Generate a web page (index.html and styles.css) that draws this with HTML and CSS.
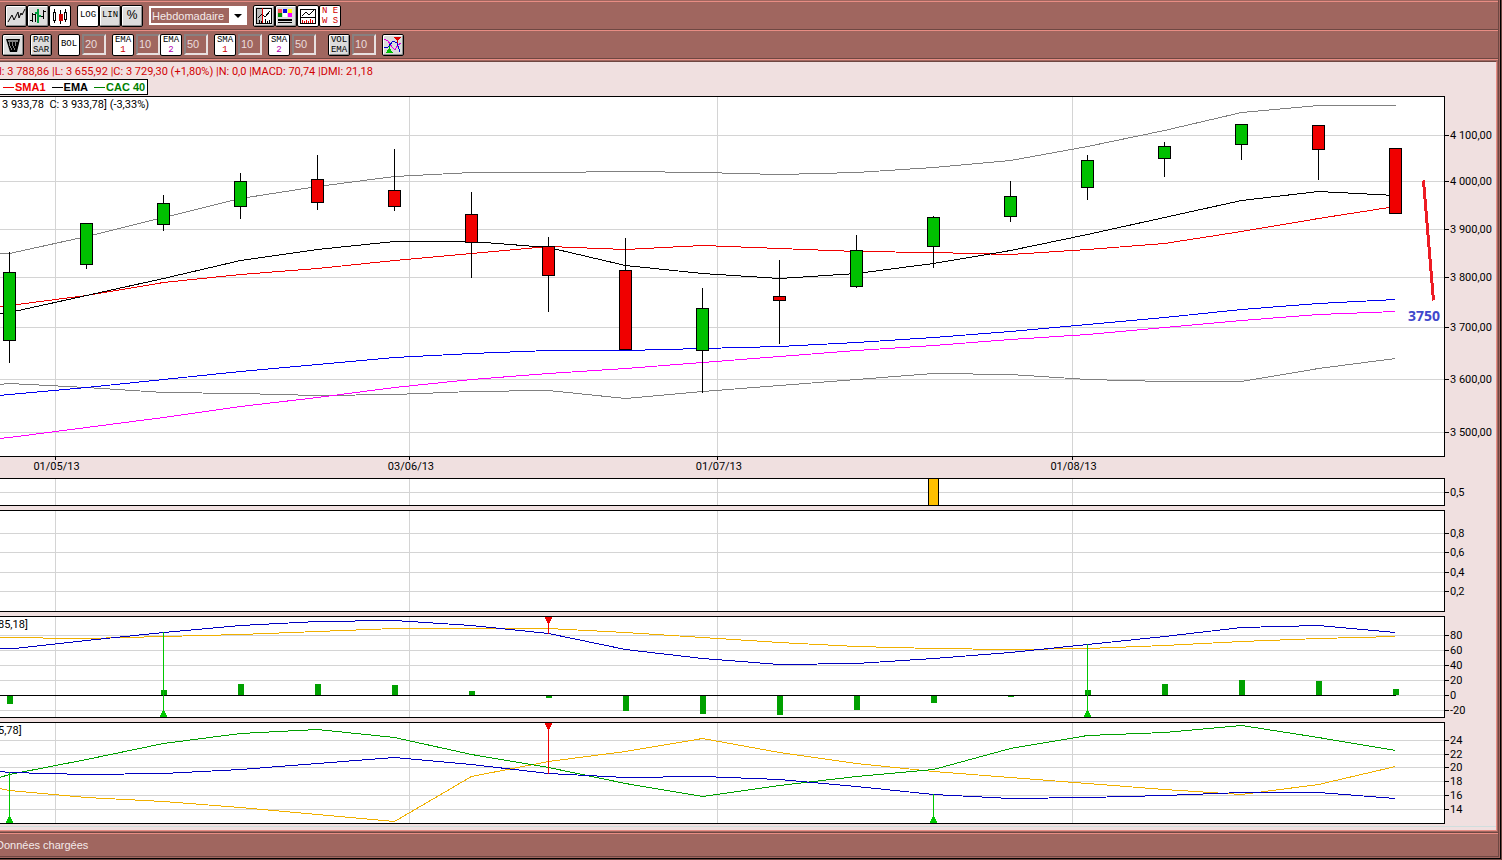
FILE: index.html
```html
<!DOCTYPE html>
<html lang="fr">
<head>
  <meta charset="UTF-8">
  <meta name="viewport" content="width=device-width, initial-scale=1.0">
  <title>CAC 40 - Hebdomadaire</title>
  <link rel="stylesheet" href="styles.css">
</head>
<body>
  <div class="app">
    <div class="toolbar toolbar-main">
      <div class="group">
        <button type="button" class="btn" aria-label="Ligne">
          <svg viewBox="0 0 20 20"><path d="M2 16l4-7 2 5 4-8 1 6 2-5 1 2 3-6" fill="none" stroke="#000"/></svg>
        </button>
        <button type="button" class="btn" aria-label="Barres">
          <svg viewBox="0 0 20 20" class="crisp"><path d="M4.500 7v9M2 14.500h2M5 8.500h2M15.500 4v9M13 10.500h2M16 5.500h2M7.500 6v10" fill="none" stroke="#000"/><path d="M10 3v14M7 7h3M10 10h3" fill="none" stroke="#00a040" stroke-width="2"/></svg>
        </button>
        <button type="button" class="btn on" aria-label="Chandeliers">
          <svg viewBox="0 0 20 20" class="crisp"><path d="M4.500 3v14M15.500 3v13" stroke="#000"/><path d="M3.500 6.500h2v8h-2zM14.500 6.500h2v7h-2z" fill="#fff" stroke="#000"/><path d="M10.500 4v14" stroke="#000"/><path d="M9 8h4v7H9z" fill="#d00000"/></svg>
        </button>
      </div>
      <div class="group">
        <button type="button" class="btn on">LOG</button>
        <button type="button" class="btn">LIN</button>
        <button type="button" class="btn percent">%</button>
      </div>
      <div class="period">
        <select aria-label="Période">
          <option>Hebdomadaire</option>
        </select>
        <svg class="arrow" viewBox="0 0 8 4"><path d="M0 0h8l-4 4z"/></svg>
      </div>
      <div class="group">
        <button type="button" class="btn" aria-label="Curseur">
          <svg viewBox="0 0 20 20" class="crisp"><path d="M2.500 2.500h15v15h-15z" fill="#fff" stroke="#000"/><path d="M3 3h5v14H3z" fill="#bbb"/><path d="M4 12l4-4 3 3 5-6" fill="none" stroke="#000"/><path d="M5.500 17v-3M7.500 17v-2M11.500 17v-4M13.500 17v-2M15.500 17v-3" stroke="#000"/><path d="M8.500 2v15" stroke="#e00000"/></svg>
        </button>
        <button type="button" class="btn" aria-label="Couleurs">
          <svg viewBox="0 0 20 20" class="crisp"><path d="M2 3h4v4H2z" fill="#ff5050"/><path d="M7 3h4v4H7z" fill="#0000e0"/><path d="M12 3h4v4h-4z" fill="#ff0"/><path d="M2 7h4v4H2z" fill="#009000"/><path d="M7 7h4v4H7z" fill="#fff"/><path d="M12 7h4v4h-4z" fill="#f0f"/><path d="M2 13h14v2H2zM2 16h14v1H2z"/></svg>
        </button>
        <button type="button" class="btn on" aria-label="Volumes">
          <svg viewBox="0 0 20 20" class="crisp"><path d="M2.500 3.500h15v8h-15zM2.500 11v6.500h15V11" fill="none" stroke="#000"/><path d="M4 10l4-4 3 3 5-5" fill="none" stroke="#000"/><path d="M4.500 17v-3M6.500 17v-2M8.500 17v-3M10.500 17v-2M12.500 17v-4M14.500 17v-3" stroke="#e00000"/></svg>
        </button>
        <button type="button" class="btn on news"><span>N E</span><span>W S</span></button>
      </div>
    </div>

    <div class="toolbar toolbar-indicators">
      <button type="button" class="btn" aria-label="Corbeille">
        <svg viewBox="0 0 20 20"><path d="M3 4h14l-3 13H7z" fill="#000"/><path d="M5 6h10" stroke="#fff"/><path d="M6 8h8M6 10h8M7 12h6M8 14h4" stroke="#fff" stroke-dasharray="1 2"/></svg>
      </button>
      <button type="button" class="btn"><span>PAR</span><span>SAR</span></button>
      <div class="field">
        <button type="button" class="btn on">BOL</button>
        <input type="text" value="20" aria-label="Période BOL">
      </div>
      <div class="group">
        <div class="field">
          <button type="button" class="btn on"><span>EMA</span><span class="red">1</span></button>
          <input type="text" value="10" aria-label="Période EMA 1">
        </div>
        <div class="field">
          <button type="button" class="btn on"><span>EMA</span><span class="purple">2</span></button>
          <input type="text" value="50" aria-label="Période EMA 2">
        </div>
      </div>
      <div class="field">
        <button type="button" class="btn on"><span>SMA</span><span class="red">1</span></button>
        <input type="text" value="10" aria-label="Période SMA 1">
      </div>
      <div class="field">
        <button type="button" class="btn on"><span>SMA</span><span class="purple">2</span></button>
        <input type="text" value="50" aria-label="Période SMA 2">
      </div>
      <div class="field field-volume">
        <button type="button" class="btn"><span>VOL</span><span>EMA</span></button>
        <input type="text" value="10" aria-label="Période EMA volume">
      </div>
      <button type="button" class="btn" aria-label="Signaux">
        <svg viewBox="0 0 20 20" class="crisp"><path d="M1 4l4 2 4 6 3 3 3-5 3-2" fill="none" stroke="#e000e0"/><path d="M1 13l4-1 5-6 4 2 3 9" fill="none" stroke="#0000d0"/><path d="M11 2h7l-3 4v2h-1V6z" fill="#e00000"/><path d="M3 18h7l-3-5v-2H6v2z" fill="#00c000"/></svg>
      </button>
    </div>

    <main class="charts">
      <p class="quote">H: 3 788,86 |L: 3 655,92 |C: 3 729,30 (+1,80%) |N: 0,0 |MACD: 70,74 |DMI: 21,18</p>
      <div class="legend">
        <span class="key sma">SMA1</span>
        <span class="key ema">EMA</span>
        <span class="key cac">CAC 40</span>
      </div>

      <!-- Price -->
      <section class="panel price">
        <div class="plot">
          <svg viewBox="0 97 1444 359" preserveAspectRatio="none">
            <g transform="translate(.5 .5)">
              <path class="grid" d="M-1 135H1444M-1 181H1444M-1 229H1444M-1 277H1444M-1 327H1444M-1 379H1444M-1 432H1444M55 96V456M409 96V456M717 96V456M1072 96V456"/>
              <polyline class="gray" points="-1,253 9,253 86,236 163,217 240,198 317,186 394,176 471,172 548,172 625,171 702,172 779,174 856,172 933,167 1010,160 1087,146 1164,130 1241,112 1318,105 1395,105"/>
              <polyline class="gray" points="-1,384 9,383 86,387 163,392 240,393 317,395 394,394 471,391 548,390 625,398 702,391 779,385 856,379 933,373 1010,374 1087,379 1164,381 1241,381 1318,368 1395,358"/>
              <polyline class="magenta" points="-1,438 9,437 86,427 163,417 240,406 317,397 394,387 471,379 548,373 625,368 702,362 779,356 856,350 933,345 1010,339 1087,334 1164,327 1241,320 1318,314 1395,311"/>
              <polyline class="blue" points="-1,395 9,394 86,387 163,379 240,371 317,364 394,357 471,353 548,350 625,350 702,348 779,346 856,342 933,337 1010,331 1087,324 1164,317 1241,309 1318,303 1395,299"/>
              <polyline class="red-line" points="-1,306 9,305 86,295 163,282 240,274 317,268 394,260 471,253 548,246 625,249 702,245 779,248 856,251 933,252 1010,254 1087,249 1164,243 1241,231 1318,218 1395,206"/>
              <polyline class="black" points="-1,313 9,312 86,295 163,278 240,260 317,249 394,241 471,241 548,247 625,265 702,273 779,278 856,273 933,263 1010,250 1087,234 1164,217 1241,200 1318,191 1395,195"/>
              <path class="black" d="M9 251V362M86 222V268M163 194V230M240 172V218M317 154V209M394 148V210M471 191V277M548 236V311M625 237V349M702 287V392M779 259V343M856 234V287M933 215V267M1010 180V221M1087 154V199M1164 141V176M1241 124V159M1318 125V179"/>
              <g class="up">
                <rect x="3" y="272" width="12" height="68"/>
                <rect x="80" y="223" width="12" height="41"/>
                <rect x="157" y="203" width="12" height="21"/>
                <rect x="234" y="181" width="12" height="25"/>
                <rect x="696" y="308" width="12" height="42"/>
                <rect x="850" y="250" width="12" height="36"/>
                <rect x="927" y="217" width="12" height="29"/>
                <rect x="1004" y="196" width="12" height="20"/>
                <rect x="1081" y="160" width="12" height="27"/>
                <rect x="1158" y="146" width="12" height="12"/>
                <rect x="1235" y="124" width="12" height="20"/>
              </g>
              <g class="down">
                <rect x="311" y="179" width="12" height="23"/>
                <rect x="388" y="190" width="12" height="16"/>
                <rect x="465" y="214" width="12" height="28"/>
                <rect x="542" y="246" width="12" height="29"/>
                <rect x="619" y="270" width="12" height="79"/>
                <rect x="773" y="296" width="12" height="4"/>
                <rect x="1312" y="125" width="12" height="24"/>
                <rect x="1389" y="148" width="12" height="65"/>
              </g>
              <path class="forecast" d="M1423 180L1433 300"/>
            </g>
          </svg>
          <span class="caption">3 933,78&nbsp; C: 3 933,78] (-3,33%)</span>
          <span class="target">3750</span>
        </div>
        <svg class="axis" viewBox="0 96 51 361" preserveAspectRatio="none">
          <path d="M0 135.500h4M0 181.500h4M0 229.500h4M0 277.500h4M0 327.500h4M0 379.500h4M0 432.500h4"/>
          <text x="5" y="139">4 100,00</text>
          <text x="5" y="185">4 000,00</text>
          <text x="5" y="233">3 900,00</text>
          <text x="5" y="281">3 800,00</text>
          <text x="5" y="331">3 700,00</text>
          <text x="5" y="383">3 600,00</text>
          <text x="5" y="436">3 500,00</text>
        </svg>
      </section>

      <svg class="dates">
        <rect x="3.810%" width="1" height="3"/>
        <rect x="28.300%" width="1" height="3"/>
        <rect x="49.620%" width="1" height="3"/>
        <rect x="74.190%" width="1" height="3"/>
        <text x="3.910%" y="13">01/05/13</text>
        <text x="28.440%" y="13">03/06/13</text>
        <text x="49.750%" y="13">01/07/13</text>
        <text x="74.290%" y="13">01/08/13</text>
      </svg>

      <section class="panel signal">
        <div class="plot">
          <svg viewBox="0 479 1444 26" preserveAspectRatio="none">
            <g transform="translate(.5 .5)">
              <path class="grid" d="M-1 492H1444M55 478V505M409 478V505M717 478V505M1072 478V505"/>
              <rect class="mark" x="928" y="478" width="10" height="28"/>
            </g>
          </svg>
        </div>
        <svg class="axis" viewBox="0 478 51 28" preserveAspectRatio="none">
          <path d="M0 492.500h4"/>
          <text x="5" y="496">0,5</text>
        </svg>
      </section>

      <section class="panel">
        <div class="plot">
          <svg viewBox="0 511 1444 100" preserveAspectRatio="none">
            <g transform="translate(.5 .5)">
              <path class="grid" d="M-1 533H1444M-1 552H1444M-1 572H1444M-1 591H1444M55 510V611M409 510V611M717 510V611M1072 510V611"/>
            </g>
          </svg>
        </div>
        <svg class="axis" viewBox="0 510 51 102" preserveAspectRatio="none">
          <path d="M0 533.500h4M0 552.500h4M0 572.500h4M0 591.500h4"/>
          <text x="5" y="537">0,8</text>
          <text x="5" y="556">0,6</text>
          <text x="5" y="576">0,4</text>
          <text x="5" y="595">0,2</text>
        </svg>
      </section>

      <!-- MACD -->
      <section class="panel">
        <div class="plot">
          <svg viewBox="0 617 1444 100" preserveAspectRatio="none">
            <path class="grid" transform="translate(.5 .5)" d="M-1 635H1444M-1 650H1444M-1 665H1444M-1 680H1444M-1 695H1444M-1 710H1444M55 616V717M409 616V717M717 616V717M1072 616V717"/>
            <g class="bars">
              <rect x="7" y="696" width="6" height="8"/>
              <rect x="161" y="690" width="6" height="5"/>
              <rect x="238" y="684" width="6" height="11"/>
              <rect x="315" y="684" width="6" height="11"/>
              <rect x="392" y="685" width="6" height="10"/>
              <rect x="469" y="691" width="6" height="4"/>
              <rect x="546" y="696" width="6" height="2"/>
              <rect x="623" y="696" width="6" height="15"/>
              <rect x="700" y="696" width="6" height="18"/>
              <rect x="777" y="696" width="6" height="19"/>
              <rect x="854" y="696" width="6" height="14"/>
              <rect x="931" y="696" width="6" height="7"/>
              <rect x="1008" y="696" width="6" height="1"/>
              <rect x="1085" y="690" width="6" height="5"/>
              <rect x="1162" y="684" width="6" height="11"/>
              <rect x="1239" y="680" width="6" height="15"/>
              <rect x="1316" y="681" width="6" height="14"/>
              <rect x="1393" y="689" width="6" height="6"/>
            </g>
            <g transform="translate(.5 .5)">
              <path class="black" d="M-1 695H1395"/>
              <polyline class="orange" points="-1,637 86,638 163,636 240,634 317,631 394,628 471,628 548,628 625,632 702,637 779,642 856,646 933,648 1010,649 1087,648 1164,645 1241,641 1318,638 1395,636"/>
              <polyline class="navy" points="-1,648 14,648 86,640 163,632 240,625 317,621 394,620 471,625 548,633 625,649 702,658 779,664 856,663 933,658 1010,652 1087,644 1164,636 1241,627 1318,625 1395,632"/>
              <path class="buy" d="M163 631V716M1087 643V716"/>
              <path class="sell" d="M548 617V633"/>
            </g>
            <path class="buy-head" d="M162 711h3v2h1v2h1v2h-7v-2h1v-2h1zM1086 711h3v2h1v2h1v2h-7v-2h1v-2h1z"/>
            <path class="sell-head" d="M545 617h7v2h-1v2h-1v2h-3v-2h-1v-2h-1z"/>
          </svg>
          <span class="caption cut">85,18]</span>
        </div>
        <svg class="axis" viewBox="0 616 51 102" preserveAspectRatio="none">
          <path d="M0 635.500h4M0 650.500h4M0 665.500h4M0 680.500h4M0 695.500h4M0 710.500h4"/>
          <text x="5" y="639">80</text>
          <text x="5" y="654">60</text>
          <text x="5" y="669">40</text>
          <text x="5" y="684">20</text>
          <text x="5" y="699">0</text>
          <text x="5" y="714">-20</text>
        </svg>
      </section>

      <!-- DMI -->
      <section class="panel">
        <div class="plot">
          <svg viewBox="0 723 1444 100" preserveAspectRatio="none">
            <g transform="translate(.5 .5)">
              <path class="grid" d="M-1 740H1444M-1 754H1444M-1 767H1444M-1 781H1444M-1 795H1444M-1 809H1444M55 722V823M409 722V823M717 722V823M1072 722V823"/>
              <polyline class="orange" points="-1,788 9,790 86,797 163,801 240,807 317,814 394,821 471,776 548,761 625,751 702,738 779,752 856,763 933,771 1010,777 1087,783 1164,789 1241,794 1318,784 1395,766"/>
              <polyline class="green" points="-1,777 9,774 86,759 163,743 240,733 317,729 394,737 471,754 548,767 625,783 702,796 779,785 856,776 933,769 1010,748 1087,735 1164,732 1241,725 1318,737 1395,750"/>
              <polyline class="navy" points="-1,771 9,772 86,774 163,773 240,769 317,763 394,757 471,764 548,773 625,777 702,776 779,779 856,786 933,794 1010,798 1087,797 1164,795 1241,792 1318,792 1395,798"/>
              <path class="buy" d="M9 771V822M933 793V822"/>
              <path class="sell" d="M548 723V773"/>
            </g>
            <path class="buy-head" d="M8 817h3v2h1v2h1v2H6v-2h1v-2h1zM932 817h3v2h1v2h1v2h-7v-2h1v-2h1z"/>
            <path class="sell-head" d="M545 723h7v2h-1v2h-1v2h-3v-2h-1v-2h-1z"/>
          </svg>
          <span class="caption cut">5,78]</span>
        </div>
        <svg class="axis" viewBox="0 722 51 102" preserveAspectRatio="none">
          <path d="M0 740.500h4M0 754.500h4M0 767.500h4M0 781.500h4M0 795.500h4M0 809.500h4"/>
          <text x="5" y="744">24</text>
          <text x="5" y="758">22</text>
          <text x="5" y="771">20</text>
          <text x="5" y="785">18</text>
          <text x="5" y="799">16</text>
          <text x="5" y="813">14</text>
        </svg>
      </section>
      <hr class="rule">
    </main>

    <footer class="status">Données chargées</footer>
  </div>
</body>
</html>
```
FILE: styles.css
```css
* {
  box-sizing: border-box;
}

body {
  margin: 0;
  font-family: "Liberation Sans", Arial, sans-serif;
  font-size: 11px;
  color: #000000;
}

.app {
  display: flex;
  flex-direction: column;
  min-height: 100vh;
  padding: 1px 4px 4px 0;
  background: #a0665f;
  box-shadow: inset -1px -1px #6e4742, inset -2px -2px #000000, inset -3px -3px #a0665f, inset -4px -4px #6e4742;
}

/* toolbars */
.toolbar {
  display: flex;
  align-items: center;
  gap: 6px;
  height: 29px;
  border-top: 1px solid #e88d84;
  border-bottom: 1px solid #6e4742;
}

.toolbar-main {
  padding-left: 5px;
}

.toolbar-indicators {
  padding-left: 2px;
  box-shadow: 0 1px #e88d84;
}

.group, .field {
  display: flex;
}

.field {
  gap: 2px;
}

.field-volume {
  margin-left: 6px;
}

.btn {
  display: flex;
  flex-direction: column;
  align-items: center;
  justify-content: center;
  width: 22px;
  height: 22px;
  padding: 0;
  border: 1px solid #000000;
  border-radius: 2px;
  background: #dcdcdc;
  box-shadow: inset 1px 1px #ffffff, inset -1px -1px #909090;
  color: #000000;
  font-family: "Liberation Mono", monospace;
  font-size: 9px;
  line-height: 9px;
}

.btn.on {
  background: #ffffff;
  box-shadow: none;
}

.btn span {
  line-height: 10px;
}

.btn svg {
  display: block;
  width: 20px;
  height: 20px;
}

.btn.percent {
  font-family: "Liberation Sans", Arial, sans-serif;
  font-size: 12px;
}

.btn .red, .btn.news {
  color: #d00000;
}

.btn .purple {
  color: #b000b0;
}

.field input {
  width: 24px;
  height: 21px;
  padding: 0 1px;
  border: 2px solid #e8e0e0;
  border-top-color: #888080;
  border-left-color: #888080;
  background: #a0665f;
  color: #eadcdc;
  font-family: inherit;
  font-size: 11px;
}

.period {
  position: relative;
  width: 98px;
  height: 19px;
}

.period select {
  appearance: none;
  width: 100%;
  height: 100%;
  padding: 0 0 0 1px;
  border: 2px solid #ffffff;
  border-right-width: 18px;
  border-radius: 0;
  background: #a0665f;
  color: #f4eaea;
  font-family: inherit;
  font-size: 11px;
}

.period .arrow {
  position: absolute;
  right: 5px;
  top: 8px;
  width: 8px;
  height: 4px;
}

/* charts */
.charts {
  flex: 1;
  margin: 2px 1px 1px 0;
  border: 1px solid #e88d84;
  border-top-color: #6e4742;
  border-left: 0;
  background: #f0e0e0;
  font-family: Roboto, Arial, sans-serif;
  overflow: hidden;
}

.quote {
  height: 17px;
  margin: 0;
  line-height: 19px;
  text-indent: -6px;
  white-space: nowrap;
  color: #d00000;
}

.legend {
  display: flex;
  gap: 6px;
  width: max-content;
  height: 16px;
  margin-bottom: 1px;
  padding: 0 2px 0 3px;
  border: 1px solid #000000;
  border-left: 0;
  background: #ffffff;
  font-family: "Liberation Sans", Arial, sans-serif;
  font-weight: bold;
  line-height: 14px;
}

.key {
  display: flex;
  align-items: center;
  gap: 1px;
}

.key::before {
  content: "";
  width: 11px;
  height: 1px;
  background: currentColor;
}

.sma {
  color: #f00000;
}

.cac {
  color: #008000;
}

.panel {
  display: flex;
  height: 102px;
  margin-bottom: 4px;
}

.panel.price {
  height: 361px;
  margin-bottom: 0;
}

.panel.signal {
  height: 28px;
}

.plot {
  position: relative;
  flex: 1;
  border: 1px solid #000000;
  border-left: 0;
  background: #ffffff;
}

.plot svg {
  display: block;
  width: 100%;
  height: 100%;
}

.plot svg, .crisp, .axis path, .dates rect {
  shape-rendering: crispEdges;
}

.plot path, .plot polyline, .plot rect {
  vector-effect: non-scaling-stroke;
}

.plot polyline, .plot path {
  fill: none;
}

.axis {
  flex: none;
  width: 51px;
  height: 100%;
}

.axis path {
  stroke: #000000;
}

.dates {
  display: block;
  width: calc(100% - 51px);
  height: 21px;
}

.dates text {
  text-anchor: middle;
}

.caption {
  position: absolute;
  left: 2px;
  top: 1px;
  line-height: 13px;
}

.caption.cut {
  left: -2px;
}

.target {
  position: absolute;
  right: 4px;
  top: 209px;
  font-family: "Open Sans", sans-serif;
  font-size: 14px;
  line-height: 20px;
  font-weight: bold;
  color: #3f48cc;
}

.grid {
  stroke: #d4d4d4;
}

.gray {
  stroke: #808080;
}

.black {
  stroke: #000000;
}

.red-line {
  stroke: #f00000;
}

.blue {
  stroke: #0000f0;
}

.navy {
  stroke: #0000c0;
}

.magenta {
  stroke: #ff00ff;
}

.orange {
  stroke: #f0b000;
}

.green {
  stroke: #00a000;
}

.up rect, .down rect, .mark {
  fill: #00c000;
  stroke: #000000;
}

.down rect {
  fill: #f00000;
}

.mark {
  fill: #ffc000;
}

.forecast {
  stroke: #ed1c24;
  stroke-width: 3px;
}

.bars {
  fill: #00a000;
}

.buy {
  stroke: #00c800;
}

.sell {
  stroke: #f00000;
}

.plot .buy-head {
  fill: #00c800;
}

.plot .sell-head {
  fill: #f00000;
}

.rule {
  height: 1px;
  margin: -2px 0 3px;
  border: 0;
  background: #d0dede;
}

.status {
  height: 24px;
  border-top: 1px solid #6e4742;
  box-shadow: inset 0 1px #e88d84;
  color: #f4eaea;
  line-height: 25px;
  text-indent: -4px;
  overflow: hidden;
}
```
